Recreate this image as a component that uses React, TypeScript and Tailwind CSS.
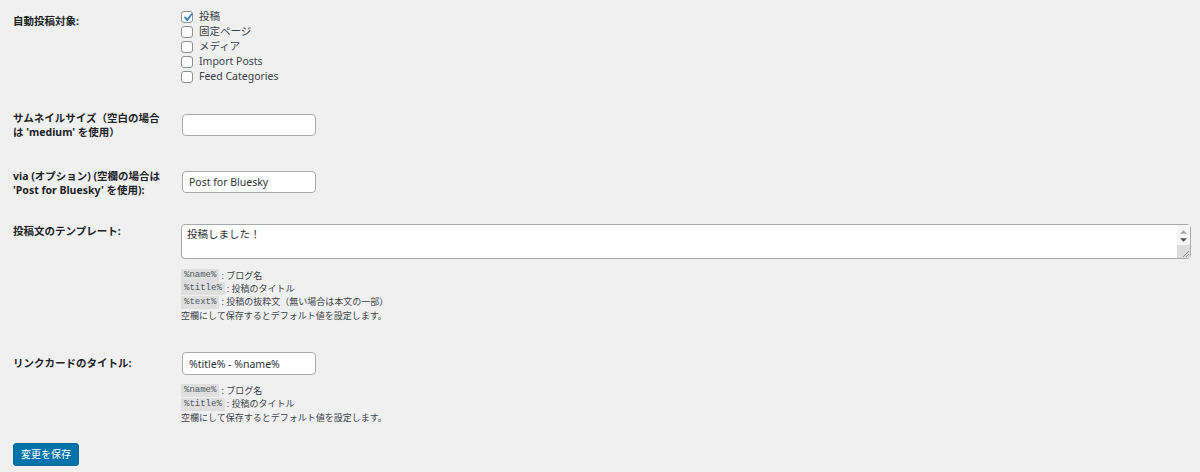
import React from "react"

const sans = "font-['Noto_Sans','Noto_Sans_CJK_JP',sans-serif]"

const postTypes = [
  { name: "投稿", checked: true },
  { name: "固定ページ", checked: false },
  { name: "メディア", checked: false },
  { name: "Import Posts", checked: false },
  { name: "Feed Categories", checked: false },
]

function Checkbox({ checked }: { checked: boolean }) {
  return (
    <span className="relative flex h-[12px] w-[12px] shrink-0 items-center justify-center rounded-[3px] border border-[#8c8f94] bg-white">
      {checked && (
        <svg viewBox="0 0 20 20" className="absolute -left-[3px] -top-[3px] h-[17px] w-[17px]">
          <path d="M14.83 4.89l1.34.94-5.81 8.38H9.02L5.78 9.67l1.34-1.25 2.57 2.4z" fill="#3582c4" />
        </svg>
      )}
    </span>
  )
}

function Code({ children }: { children: React.ReactNode }) {
  return (
    <code className="inline-block h-[13px] bg-[#dfdfe0] px-[3px] font-['Liberation_Mono','DejaVu_Sans_Mono',monospace] text-[9px] leading-[13px] text-[#50575e]">
      {children}
    </code>
  )
}

function HelpLine({ code, text }: { code: string; text: string }) {
  return (
    <div className="flex h-[13.3px] items-center">
      <Code>{code}</Code>
      <span className="ml-[2px]">: {text}</span>
    </div>
  )
}

function Label({ children, className }: { children: React.ReactNode; className?: string }) {
  return (
    <div className={"w-[168px] shrink-0 pr-[8px] text-[10.5px] font-bold leading-[14.5px] text-[#1d2327] " + (className ?? "")}>
      {children}
    </div>
  )
}

export default function App() {
  return (
    <div className={`h-[472px] w-full overflow-hidden bg-[#f0f0f1] pl-[13px] ${sans}`}>
      {/* 自動投稿対象 */}
      <div className="flex pt-[9px]">
        <Label className="pt-[4.5px] leading-[15px]">自動投稿対象:</Label>
        <div className="flex flex-col">
          {postTypes.map((t) => (
            <label key={t.name} className="flex h-[15.2px] items-center gap-[6px] text-[10.5px] text-[#3c434a]">
              <Checkbox checked={t.checked} />
              {t.name}
            </label>
          ))}
        </div>
      </div>

      {/* サムネイルサイズ */}
      <div className="mt-[25px] flex">
        <Label className="pt-[1px]">
          サムネイルサイズ（空白の場合
          <br />
          は 'medium' を使用）
        </Label>
        <input className="mt-[4px] ml-[1px] h-[22px] w-[134px] rounded-[4px] border border-[#a7aaad] bg-white px-[7px] text-[10.5px] text-[#2c3338] outline-none" />
      </div>

      {/* via */}
      <div className="mt-[29px] flex">
        <Label>
          via (オプション) (空欄の場合は
          <br />
          'Post for Bluesky' を使用):
        </Label>
        <input
          defaultValue="Post for Bluesky"
          className="mt-[2px] ml-[1px] h-[22px] w-[134px] rounded-[4px] border border-[#a7aaad] bg-white px-[6px] text-[10.5px] text-[#2c3338] outline-none"
        />
      </div>

      {/* テンプレート */}
      <div className="mt-[25px] flex">
        <Label className="pt-[1.5px]">投稿文のテンプレート:</Label>
        <div className="flex flex-col">
          <div className="relative mt-[1px]">
            <textarea
              defaultValue="投稿しました！"
              className="block h-[35px] w-[1010px] resize-none overflow-hidden rounded-[4px] border border-[#a7aaad] bg-white py-[2px] pl-[5px] pr-[18px] text-[10.5px] leading-[14px] text-[#2c3338] outline-none"
            />
            {/* scrollbar */}
            <div className="absolute right-[1px] top-[1px] bottom-[1px] flex w-[13px] flex-col items-center bg-[#f5f5f5]">
              <svg viewBox="0 0 8 4" className="mt-[5px] h-[4px] w-[7px]">
                <path d="M0 4L4 0L8 4Z" fill="#a3a3a3" />
              </svg>
              <svg viewBox="0 0 8 4" className="mt-[4px] h-[4px] w-[7px]">
                <path d="M0 0L8 0L4 4Z" fill="#505050" />
              </svg>
              <div className="mt-auto flex h-[13px] w-[13px] items-end justify-end bg-[#dcdcdc]">
                <svg viewBox="0 0 10 10" className="h-[10px] w-[10px]">
                  <path d="M9 3L3 9M9 6L6 9" stroke="#8a8a8a" strokeWidth="1" />
                </svg>
              </div>
            </div>
          </div>
          <div className="mt-[10px] text-[9px] text-[#3c434a]">
            <HelpLine code="%name%" text="ブログ名" />
            <HelpLine code="%title%" text="投稿のタイトル" />
            <HelpLine code="%text%" text="投稿の抜粋文（無い場合は本文の一部）" />
            <div className="flex h-[13.3px] items-center">空欄にして保存するとデフォルト値を設定します。</div>
          </div>
        </div>
      </div>

      {/* リンクカード */}
      <div className="mt-[30px] flex">
        <Label className="pt-[3.75px]">リンクカードのタイトル:</Label>
        <div className="flex flex-col">
          <input
            defaultValue="%title% - %name%"
            className="ml-[1px] h-[23px] w-[134px] rounded-[4px] border border-[#a7aaad] bg-white px-[6px] text-[10.5px] text-[#2c3338] outline-none"
          />
          <div className="mt-[9px] text-[9px] text-[#3c434a]">
            <HelpLine code="%name%" text="ブログ名" />
            <HelpLine code="%title%" text="投稿のタイトル" />
            <div className="flex h-[13.3px] items-center">空欄にして保存するとデフォルト値を設定します。</div>
          </div>
        </div>
      </div>

      <button className="mt-[19px] flex h-[23px] w-[66px] items-center justify-center rounded-[3px] border border-[#006799] bg-[#0073aa] text-[10px] text-white">
        変更を保存
      </button>
    </div>
  )
}
